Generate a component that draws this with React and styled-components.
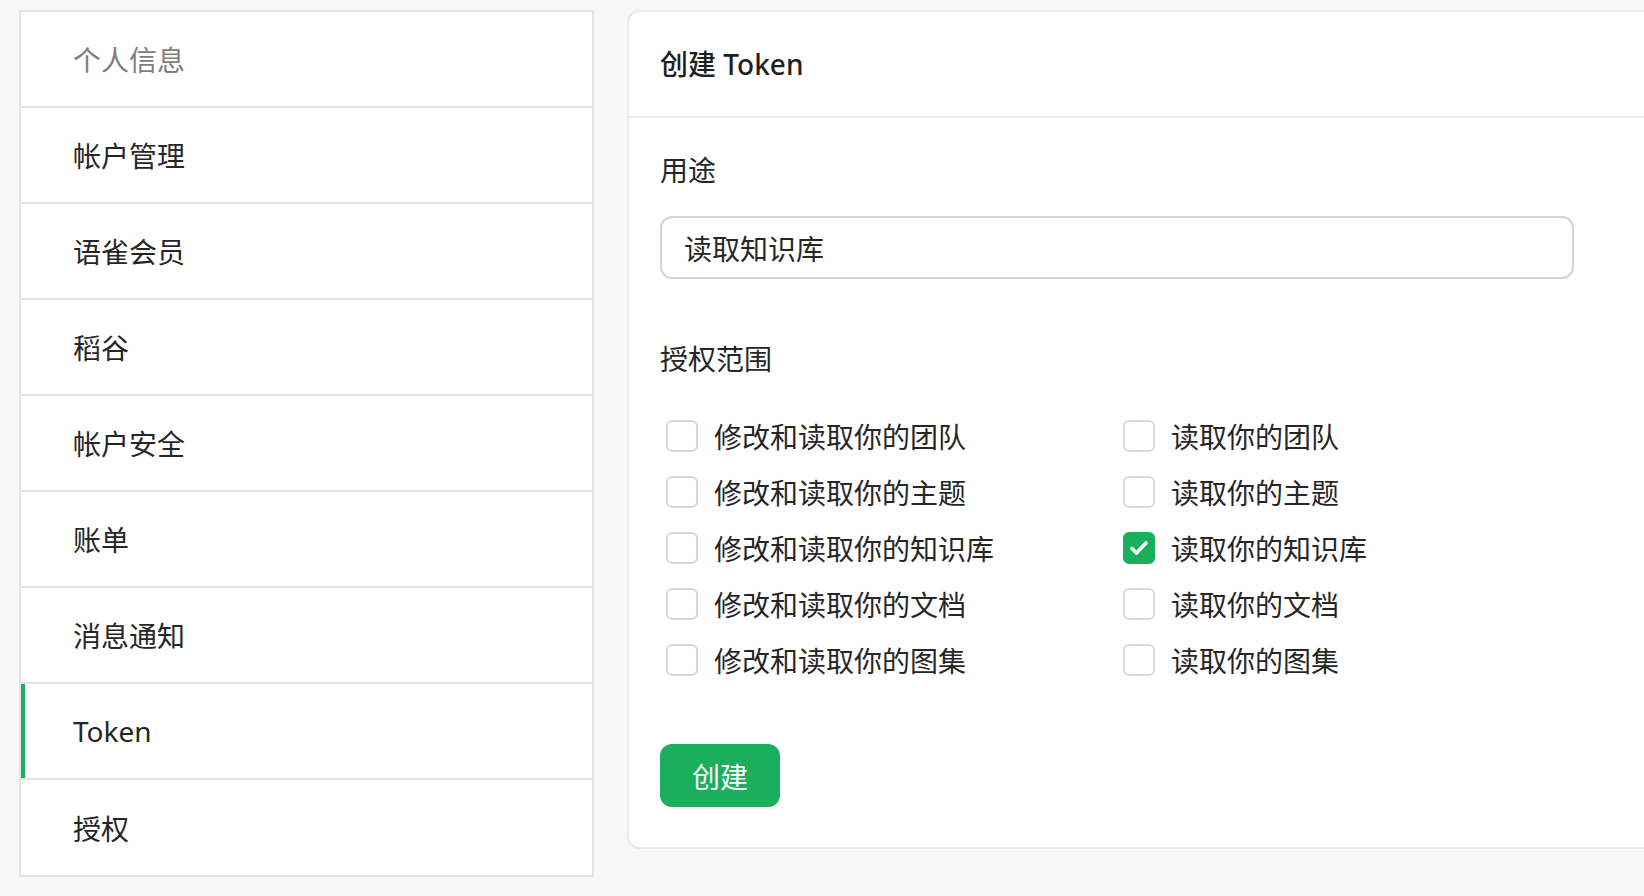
import React, { useState } from "react";
import styled, { createGlobalStyle } from "styled-components";

const GlobalStyle = createGlobalStyle`
  html, body {
    margin: 0;
    padding: 0;
    background: #f8f8f8;
    overflow: hidden;
  }
  body {
    font-family: "Noto Sans", "Noto Sans CJK SC", sans-serif;
    color: #262626;
  }
`;

const Page = styled.div`
  display: flex;
  align-items: flex-start;
  gap: 33px;
  width: 1644px;
  height: 896px;
  padding: 10px 0 0 19px;
  box-sizing: border-box;
  overflow: hidden;
`;

const Sidebar = styled.ul`
  flex: 0 0 575px;
  margin: 0;
  padding: 0;
  list-style: none;
  background: #fff;
  border: 2px solid #e3e3e3;
  box-sizing: border-box;
`;

const NavItem = styled.li`
  position: relative;
  display: flex;
  align-items: center;
  height: 96px;
  padding-left: 52px;
  box-sizing: border-box;
  border-bottom: 2px solid #e3e3e3;
  font-size: 28px;
  color: ${(p) => (p.$muted ? "#7d7d7d" : "#262626")};

  &:last-child {
    border-bottom: none;
    height: 95px;
  }

  &::before {
    content: "";
    display: ${(p) => (p.$active ? "block" : "none")};
    position: absolute;
    left: 0;
    top: 0;
    bottom: 0;
    width: 4px;
    background: #1bae5c;
  }
`;

const Panel = styled.section`
  flex: 0 0 1100px;
  background: #fff;
  border: 2px solid #ebebeb;
  border-radius: 12px;
  box-sizing: border-box;
`;

const PanelHeader = styled.div`
  display: flex;
  align-items: center;
  height: 106px;
  padding-left: 31px;
  padding-bottom: 2px;
  border-bottom: 2px solid #ececec;
  box-sizing: border-box;
  font-size: 28px;
  font-weight: 500;
  color: #1f1f1f;
`;

const PanelBody = styled.div`
  display: flex;
  flex-direction: column;
  align-items: flex-start;
  padding: 32px 31px 40px;
`;

const Label = styled.div`
  font-size: 28px;
  line-height: 40px;
  color: #262626;
  margin-bottom: ${(p) => p.$gap}px;
`;

const TextInput = styled.input`
  width: 914px;
  height: 63px;
  box-sizing: border-box;
  border: 2px solid #d4d4d4;
  border-radius: 12px;
  padding: 0 22px;
  font-family: inherit;
  font-size: 28px;
  color: #262626;
  outline: none;
  margin-bottom: 60px;
`;

const ScopeGrid = styled.div`
  display: grid;
  grid-template-columns: 457px 457px;
  grid-auto-rows: 56px;
  margin-bottom: 56px;
`;

const ScopeItem = styled.label`
  display: flex;
  align-items: center;
  gap: 16px;
  padding-left: 6px;
  font-size: 28px;
  color: #262626;
  cursor: pointer;
`;

const Box = styled.span`
  display: flex;
  align-items: center;
  justify-content: center;
  width: 32px;
  height: 32px;
  box-sizing: border-box;
  border-radius: 6px;
  border: 2px solid ${(p) => (p.$checked ? "#1bae5c" : "#d9d9d9")};
  background: ${(p) => (p.$checked ? "#1bae5c" : "#fff")};
`;

const CreateButton = styled.button`
  width: 120px;
  height: 63px;
  border: none;
  border-radius: 12px;
  background: #1bae5c;
  color: #fff;
  font-family: inherit;
  font-size: 28px;
  cursor: pointer;
`;

const navItems = ["个人信息", "帐户管理", "语雀会员", "稻谷", "帐户安全", "账单", "消息通知", "Token", "授权"];

const scopes = [
  ["修改和读取你的团队", "读取你的团队"],
  ["修改和读取你的主题", "读取你的主题"],
  ["修改和读取你的知识库", "读取你的知识库"],
  ["修改和读取你的文档", "读取你的文档"],
  ["修改和读取你的图集", "读取你的图集"],
];

const Check = () => (
  <svg width="24" height="24" viewBox="0 0 24 24" fill="none">
    <path d="M5 12.5l4.5 4.5 9.5-10" stroke="#fff" strokeWidth="3.6" strokeLinecap="round" strokeLinejoin="round" />
  </svg>
);

const Checkbox = ({ checked, label, onToggle }) => (
  <ScopeItem onClick={onToggle}>
    <Box $checked={checked}>{checked && <Check />}</Box>
    {label}
  </ScopeItem>
);

export default function App() {
  const [checked, setChecked] = useState({ "读取你的知识库": true });
  const toggle = (k) => setChecked((c) => ({ ...c, [k]: !c[k] }));

  return (
    <>
      <GlobalStyle />
      <Page>
        <Sidebar>
          {navItems.map((n, i) => (
            <NavItem key={n} $muted={i === 0} $active={n === "Token"}>
              {n}
            </NavItem>
          ))}
        </Sidebar>
        <Panel>
          <PanelHeader>创建 Token</PanelHeader>
          <PanelBody>
            <Label $gap={26}>用途</Label>
            <TextInput defaultValue="读取知识库" />
            <Label $gap={29}>授权范围</Label>
            <ScopeGrid>
              {scopes.flat().map((s) => (
                <Checkbox key={s} label={s} checked={!!checked[s]} onToggle={() => toggle(s)} />
              ))}
            </ScopeGrid>
            <CreateButton>创建</CreateButton>
          </PanelBody>
        </Panel>
      </Page>
    </>
  );
}
